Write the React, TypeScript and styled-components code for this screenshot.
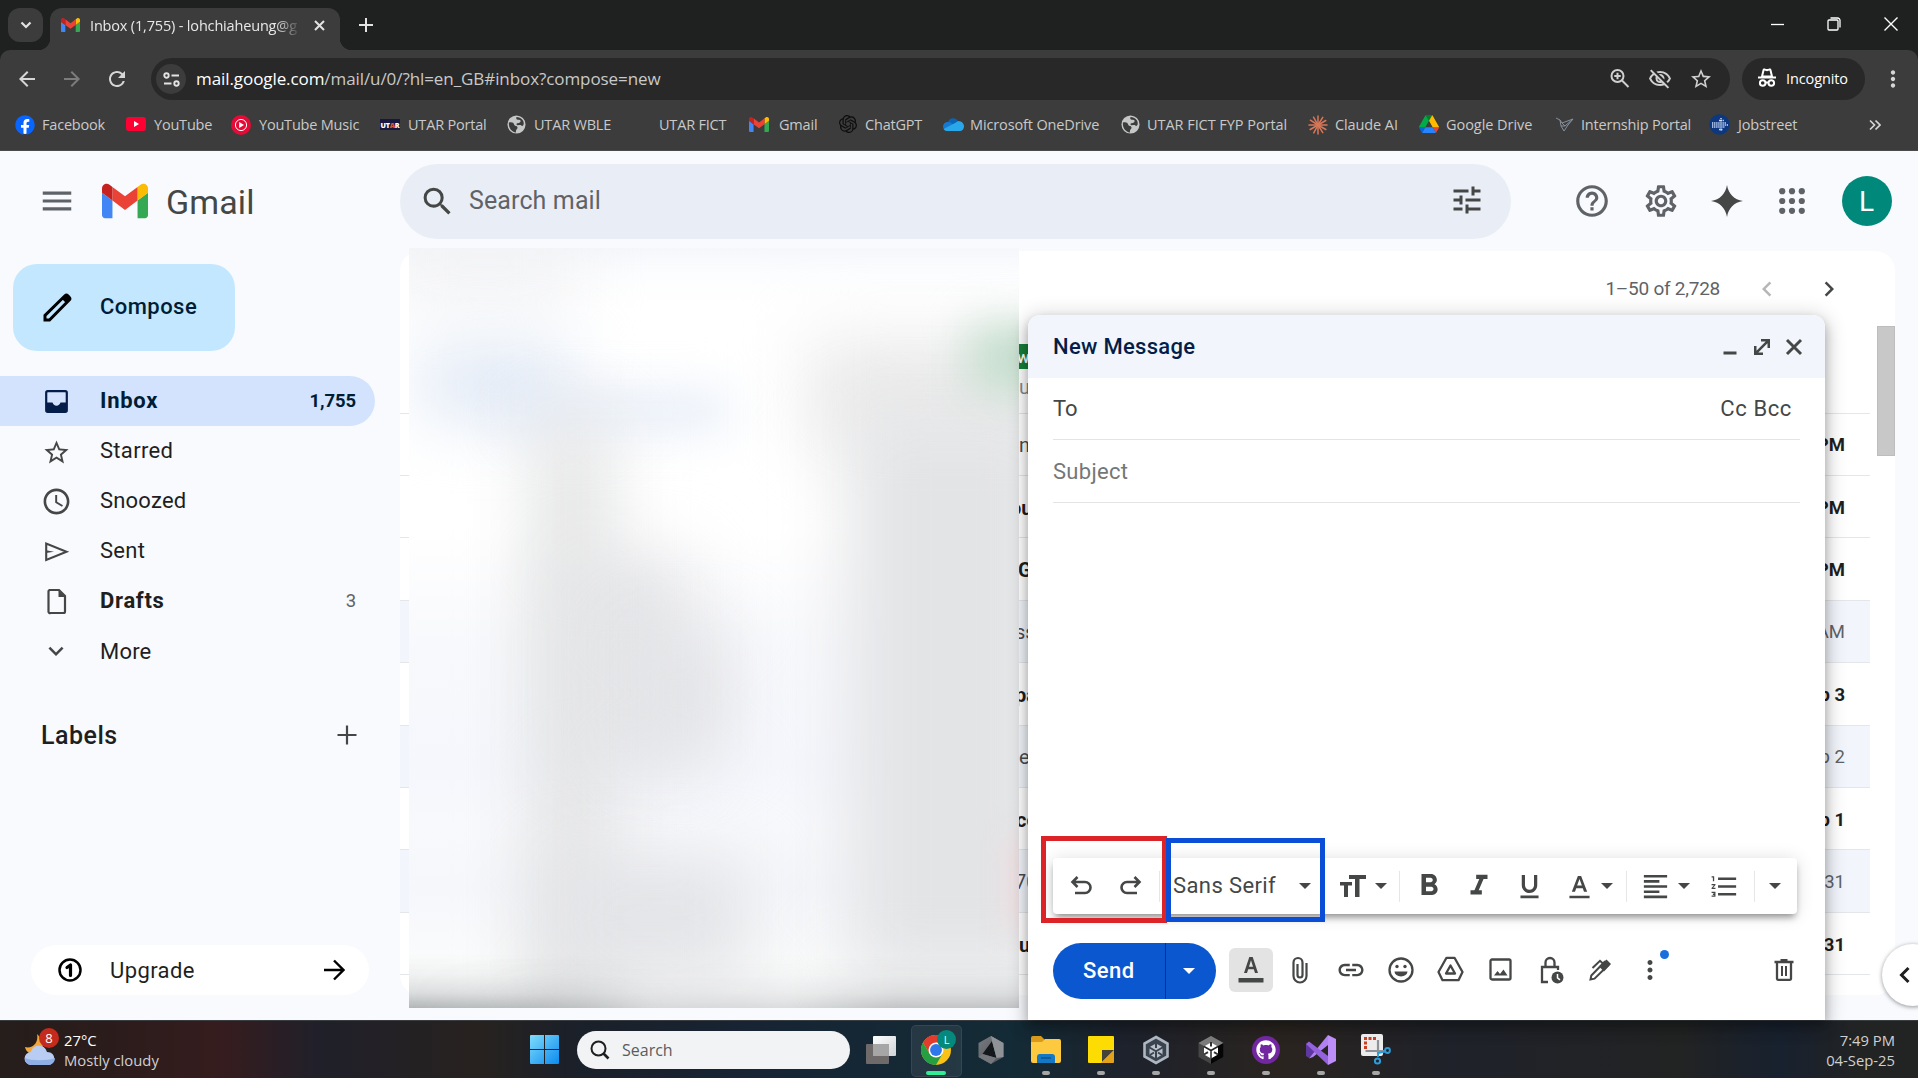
import React from "react";
import styled, { createGlobalStyle, css } from "styled-components";
import {
  MdAccessTime, MdArrowBack, MdArrowForward, MdChevronLeft, MdChevronRight,
  MdExpandMore, MdFormatAlignLeft, MdFormatBold, MdFormatItalic, MdFormatListNumbered,
  MdFormatUnderlined, MdHelpOutline, MdLink, MdMenu, MdMoreVert, MdOutlineSettings,
  MdOutlineVisibilityOff, MdRefresh, MdSearch, MdStarOutline, MdTune,
} from "react-icons/md";
import { FaFacebook, FaGithub, FaUnity } from "react-icons/fa";
import { SiOpenai } from "react-icons/si";

const GlobalStyle = createGlobalStyle`
  * { box-sizing: border-box; }
  body { margin: 0; background: #f8fafd; overflow: hidden; }
`;

const ui = `"Open Sans", "Noto Sans", sans-serif`;
const product = `Roboto, "Liberation Sans", sans-serif`;

const Screen = styled.div`
  position: relative;
  width: 1918px;
  height: 1078px;
  overflow: hidden;
  display: flex;
  flex-direction: column;
  font-family: ${product};
  svg { display: block; flex: none; }
`;

/* One icon cell: a fixed square with a gap before it */
const Cell = styled.span<{ $s: number; $ml?: number; $c?: string; $dy?: number }>`
  flex: none;
  display: flex;
  align-items: center;
  justify-content: center;
  width: ${(p) => p.$s}px;
  height: ${(p) => p.$s}px;
  margin-left: ${(p) => p.$ml ?? 0}px;
  margin-top: ${(p) => p.$dy ?? 0}px;
  color: ${(p) => p.$c ?? "#444746"};
  svg { width: 100%; height: 100%; }
`;

const Text = styled.span<{ $size: number; $ls?: number; $c?: string; $weight?: number; $ml?: number; $dy?: number }>`
  flex: none;
  white-space: pre;
  line-height: 1.2;
  font-size: ${(p) => p.$size}px;
  letter-spacing: ${(p) => p.$ls ?? 0}px;
  font-weight: ${(p) => p.$weight ?? 400};
  color: ${(p) => p.$c ?? "#1f1f1f"};
  margin-left: ${(p) => p.$ml ?? 0}px;
  margin-top: ${(p) => p.$dy ?? 0}px;
`;

/* ---------- Browser frame ---------- */
const TabStrip = styled.div`
  flex: none;
  height: 50px;
  background: #1f2120;
  display: flex;
  align-items: center;
  padding-left: 8px;
  font-family: ${ui};
`;
const TabSearch = styled.div`
  width: 35px;
  height: 34px;
  border-radius: 12px;
  background: #3c3c3c;
  display: flex;
  align-items: center;
  justify-content: center;
  color: #e3e3e3;
`;
const Tab = styled.div`
  position: relative;
  width: 290px;
  height: 42px;
  margin: 8px 0 0 7px;
  border-radius: 12px 12px 0 0;
  background: #3c3c3c;
  display: flex;
  align-items: center;
  padding: 0 0 8px 11px;
  &::before, &::after {
    content: "";
    position: absolute;
    bottom: 0;
    width: 12px;
    height: 12px;
  }
  &::before { left: -12px; background: radial-gradient(circle at 0 0, transparent 12px, #3c3c3c 12.5px); }
  &::after { right: -12px; background: radial-gradient(circle at 100% 0, transparent 12px, #3c3c3c 12.5px); }
`;
const TabTitle = styled.div`
  width: 211px;
  margin: 1px 0 0 10px;
  overflow: hidden;
  white-space: nowrap;
  font-size: 14.5px;
  letter-spacing: -0.17px;
  line-height: 20px;
  color: #e8e8e8;
  mask-image: linear-gradient(90deg, #000 88%, transparent 100%);
`;
const WindowButtons = styled.div`
  margin-left: auto;
  display: flex;
  align-items: center;
  padding: 0 20px 2px 0;
  gap: 43px;
`;
const ToolbarBack = styled.div`
  flex: none;
  background: #1f2120;
`;
const Toolbar = styled.div`
  height: 57px;
  padding-top: 1px;
  background: #3c3c3c;
  border-radius: 10px 10px 0 0;
  display: flex;
  align-items: center;
  font-family: ${ui};
`;
const Address = styled.div`
  width: 1579px;
  height: 42px;
  border-radius: 21px;
  background: #282828;
  margin-left: 22px;
  display: flex;
  align-items: center;
  padding-left: 5px;
`;
const SiteInfo = styled.div`
  width: 30px;
  height: 30px;
  border-radius: 50%;
  background: #3c3c3c;
  display: flex;
  align-items: center;
  justify-content: center;
`;
const AddressIcons = styled.div`
  margin-left: auto;
  display: flex;
  gap: 17px;
  padding-right: 17px;
`;
const Incognito = styled.div`
  width: 123px;
  height: 42px;
  margin-left: 12px;
  border-radius: 21px;
  background: #282828;
  display: flex;
  align-items: center;
  padding-left: 15px;
`;
const Bookmarks = styled.div`
  flex: none;
  height: 44px;
  background: #3c3c3c;
  border-bottom: 1px solid #4a4a4a;
  display: flex;
  align-items: center;
  padding: 0 0 8px 15px;
  font-family: ${ui};
`;
const Bookmark = styled.div<{ $w: number }>`
  flex: none;
  width: ${(p) => p.$w}px;
  display: flex;
  align-items: center;
`;

/* ---------- Gmail ---------- */
const Mail = styled.div`
  position: relative;
  flex: none;
  height: 869px;
  background: #f8fafd;
  display: flex;
  flex-direction: column;
`;
const Header = styled.header`
  flex: none;
  height: 100px;
  display: flex;
  align-items: center;
`;
const Brand = styled.div`
  width: 400px;
  display: flex;
  align-items: center;
`;
const SearchBox = styled.div`
  width: 1111px;
  height: 75px;
  border-radius: 38px;
  background: #e9eef6;
  display: flex;
  align-items: center;
`;
const Avatar = styled.div`
  width: 50px;
  height: 50px;
  margin-left: 37px;
  border-radius: 50%;
  background: #00897b;
  color: #fff;
  font-size: 28px;
  display: flex;
  align-items: center;
  justify-content: center;
  padding-right: 1px;
`;
const Body = styled.div`
  flex: 1;
  display: flex;
  min-height: 0;
`;
const Sidebar = styled.nav`
  width: 400px;
  flex: none;
  display: flex;
  flex-direction: column;
`;
const ComposeButton = styled.div`
  width: 222px;
  height: 87px;
  margin: 13px 0 25px 13px;
  border-radius: 24px;
  background: #c2e7ff;
  display: flex;
  align-items: center;
  padding-left: 27px;
`;
const Folder = styled.div<{ $active?: boolean }>`
  width: 375px;
  height: 50px;
  display: flex;
  align-items: center;
  padding: 0 19px 0 41px;
  border-radius: 0 25px 25px 0;
  ${(p) => p.$active && css`background: #d3e3fd;`}
`;
const Count = styled.span<{ $bold?: boolean }>`
  margin-left: auto;
  font-size: 18.5px;
  line-height: 1.2;
  letter-spacing: -0.1px;
  font-weight: ${(p) => (p.$bold ? 700 : 400)};
  color: ${(p) => (p.$bold ? "#001d35" : "#5f6368")};
`;
const LabelsHead = styled.div`
  display: flex;
  align-items: center;
  justify-content: space-between;
  height: 40px;
  margin-top: 39px;
  padding: 0 39px 0 41px;
`;
const Upgrade = styled.div`
  width: 338px;
  height: 50px;
  margin: auto 0 25px 31px;
  border-radius: 25px;
  background: #fff;
  display: flex;
  align-items: center;
  padding: 0 23px 0 26px;
`;
const ListPanel = styled.main`
  position: relative;
  width: 1495px;
  height: 744px;
  border-radius: 20px;
  background: #fff;
`;
const Pager = styled.div`
  height: 75px;
  display: flex;
  align-items: center;
  justify-content: flex-end;
  padding-right: 51px;
`;
const Rows = styled.div`
  width: 1470px;
`;
const Row = styled.div<{ $h?: number; $read?: boolean }>`
  height: ${(p) => p.$h ?? 62.43}px;
  border-bottom: 1px solid #e4e7ea;
  background: ${(p) => (p.$read ? "#f2f6fc" : "#fff")};
  display: flex;
  align-items: center;
  justify-content: space-between;
  padding: 2px 25px 0 619px;
`;
const Snippet = styled.span<{ $bold?: boolean; $shift?: number; $c?: string }>`
  width: 10px;
  overflow: hidden;
  white-space: nowrap;
  text-indent: ${(p) => p.$shift ?? 0}px;
  font-size: 20px;
  line-height: 26px;
  font-weight: ${(p) => (p.$bold ? 700 : 400)};
  color: ${(p) => p.$c ?? (p.$bold ? "#1f1f1f" : "#4a4d51")};
`;
const Stamp = styled.span<{ $bold?: boolean }>`
  font-size: 18.5px;
  font-weight: ${(p) => (p.$bold ? 700 : 400)};
  color: ${(p) => (p.$bold ? "#1f1f1f" : "#5f6368")};
`;
const AdSnippet = styled.div`
  width: 10px;
  overflow: hidden;
  display: flex;
  flex-direction: column;
  gap: 5px;
  padding-top: 3px;
`;
const AdChip = styled.span`
  height: 25px;
  background: #188038;
  color: #fff;
  font-size: 17px;
  font-weight: 500;
  line-height: 26px;
  text-indent: -2px;
`;
const ScrollThumb = styled.div`
  position: absolute;
  right: 0;
  top: 75px;
  width: 18px;
  height: 130px;
  background: #c8c8c8;
  border: 1px solid #bdbdbd;
`;
const Censor = styled.div`
  position: absolute;
  left: 9px;
  top: -3px;
  width: 610px;
  height: 760px;
  overflow: hidden;
  background: linear-gradient(180deg, #f5f7fb 0, #fcfdfe 26px, #ffffff 60px, #ffffff 280px, #f8f9fc 400px, #f5f7fc 520px, #f8f9fc 580px, #f5f7fb 640px, #fafbfb 710px);
`;
const Blob = styled.div<{ $x: number; $y: number; $w: number; $h: number; $c: string; $b?: number }>`
  position: absolute;
  left: ${(p) => p.$x}px;
  top: ${(p) => p.$y}px;
  width: ${(p) => p.$w}px;
  height: ${(p) => p.$h}px;
  background: ${(p) => p.$c};
  filter: blur(${(p) => p.$b ?? 34}px);
`;
const CensorFoot = styled.div`
  position: absolute;
  inset: auto 0 0 0;
  height: 54px;
  background: linear-gradient(180deg, rgba(150, 155, 158, 0), rgba(150, 155, 158, 0.1) 40%, rgba(145, 149, 152, 0.3) 72%, rgba(130, 134, 137, 0.6));
  mask-image: linear-gradient(90deg, #000, rgba(0, 0, 0, 0.8) 22%, rgba(0, 0, 0, 0.42) 40%, rgba(0, 0, 0, 0.42) 62%, rgba(0, 0, 0, 0.75) 80%);
`;
const SideToggle = styled.div`
  position: absolute;
  left: 1882px;
  top: 793px;
  width: 62px;
  height: 62px;
  border-radius: 50%;
  background: #fff;
  box-shadow: 0 1px 4px rgba(60, 64, 67, 0.55);
  display: flex;
  align-items: center;
  padding-left: 8px;
`;

/* ---------- Compose window ---------- */
const Compose = styled.section`
  position: absolute;
  left: 1028px;
  top: 164px;
  width: 797px;
  height: 705px;
  border-radius: 12px 12px 0 0;
  background: #fff;
  box-shadow: 0 8px 14px 1px rgba(0, 0, 0, 0.16), 0 3px 20px 4px rgba(0, 0, 0, 0.14), 0 4px 8px rgba(0, 0, 0, 0.12);
  display: flex;
  flex-direction: column;
`;
const ComposeHead = styled.div`
  flex: none;
  height: 63px;
  border-radius: 12px 12px 0 0;
  background: #f2f6fc;
  display: flex;
  align-items: center;
  padding: 0 22px 0 25px;
`;
const HeadButtons = styled.div`
  margin-left: auto;
  display: flex;
  align-items: center;
`;
const Field = styled.div<{ $h: number }>`
  flex: none;
  height: ${(p) => p.$h}px;
  margin: 0 25px;
  border-bottom: 1px solid #e4e4e4;
  display: flex;
  align-items: center;
  justify-content: space-between;
  padding: 2px 8px 0 0;
`;
const FormatBar = styled.div`
  flex: none;
  width: 744px;
  height: 56px;
  margin: auto 0 29px 25px;
  border-radius: 4px;
  background: #fff;
  box-shadow: 0 5px 7px -2px rgba(0, 0, 0, 0.4), 0 1px 18px rgba(0, 0, 0, 0.13);
  display: flex;
  align-items: center;
`;
const Divider = styled.span<{ $ml: number }>`
  width: 1px;
  height: 31px;
  margin-left: ${(p) => p.$ml}px;
  background: #e6e6e6;
`;
const Caret = styled.span<{ $ml: number; $c?: string }>`
  flex: none;
  margin-left: ${(p) => p.$ml}px;
  border: 6.5px solid transparent;
  border-top-color: ${(p) => p.$c ?? "#444746"};
  border-bottom-width: 0;
`;
const Actions = styled.div`
  flex: none;
  height: 56px;
  margin: 0 0 21px 25px;
  display: flex;
  align-items: center;
`;
const SendButton = styled.div`
  width: 163px;
  height: 56px;
  border-radius: 28px;
  background: #0b57d0;
  display: flex;
  align-items: center;
`;
const SendText = styled.span`
  width: 113px;
  height: 56px;
  border-right: 1px solid #06357f;
  color: #fff;
  font-size: 22px;
  font-weight: 500;
  letter-spacing: 0.5px;
  line-height: 55px;
  padding-left: 30px;
`;
const ToggleTile = styled.div`
  width: 44px;
  height: 44px;
  margin: 0 0 3px 13px;
  border-radius: 6px;
  background: #e3e3e3;
  display: flex;
  align-items: center;
  justify-content: center;
`;
const Kebab = styled.div`
  position: relative;
  width: 24px;
  height: 24px;
  margin: -2px 0 0 27px;
  &::after {
    content: "";
    position: absolute;
    left: 21px;
    top: -8px;
    width: 9px;
    height: 9px;
    border-radius: 50%;
    background: #1a6fdc;
  }
  svg { width: 30px; height: 30px; margin: -3px 0 0 -4px; }
`;
const Marker = styled.div<{ $x: number; $y: number; $w: number; $h: number; $c: string }>`
  position: absolute;
  left: ${(p) => p.$x}px;
  top: ${(p) => p.$y}px;
  width: ${(p) => p.$w}px;
  height: ${(p) => p.$h}px;
  border: 5px solid ${(p) => p.$c};
`;

/* ---------- Taskbar ---------- */
const Taskbar = styled.footer`
  flex: none;
  height: 58px;
  border-top: 1px solid #3a3d40;
  background: linear-gradient(90deg, #251e1b 0, #2b1c1b 110px, #361c1e 220px, #20202a 320px, #27221f 480px, #1b2029 570px,
    #172433 750px, #132b36 1010px, #1e222c 1130px, #2a241f 1280px, #1f222a 1450px, #222323 1680px, #18212f 1780px, #222323 1860px);
  display: flex;
  align-items: center;
  font-family: ${ui};
`;
const Weather = styled.div`
  width: 530px;
  display: flex;
  align-items: center;
  gap: 7px;
  padding-left: 23px;
`;
const WeatherIcon = styled.div`
  position: relative;
  width: 34px;
  height: 40px;
`;
const WeatherBadge = styled.span`
  position: absolute;
  left: 16px;
  top: -2px;
  width: 20px;
  height: 20px;
  border-radius: 50%;
  background: #c42b1c;
  color: #fff;
  font-size: 13px;
  line-height: 20px;
  text-align: center;
`;
const Lines = styled.div<{ $right?: boolean }>`
  display: flex;
  flex-direction: column;
  align-items: ${(p) => (p.$right ? "flex-end" : "flex-start")};
  font-size: 14.8px;
  line-height: 20px;
  color: #d0d0d0;
  white-space: nowrap;
`;
const Bright = styled.span`
  color: #fff;
`;
const TaskSearch = styled.div`
  width: 273px;
  height: 38px;
  margin-left: 18px;
  border-radius: 19px;
  background: #f2f3f4;
  display: flex;
  align-items: center;
  padding-left: 13px;
`;
const Apps = styled.div`
  display: flex;
  margin-left: 3px;
`;
const TaskApp = styled.div<{ $active?: boolean }>`
  position: relative;
  width: 55px;
  height: 58px;
  display: flex;
  align-items: center;
  justify-content: center;
  ${(p) => p.$active && css`
    &::before {
      content: "";
      position: absolute;
      left: 3px;
      top: 4px;
      width: 49px;
      height: 50px;
      border-radius: 5px;
      background: rgba(255, 255, 255, 0.07);
      border: 1px solid rgba(255, 255, 255, 0.08);
    }
  `}
  svg { position: relative; }
`;
const Running = styled.span<{ $active?: boolean }>`
  position: absolute;
  bottom: 4px;
  left: ${(p) => (p.$active ? 17.5 : 23.5)}px;
  width: ${(p) => (p.$active ? 20 : 8)}px;
  height: 4px;
  border-radius: 2px;
  background: ${(p) => (p.$active ? "#35ec96" : "#a6a6a6")};
`;
const AppBadge = styled.span`
  position: absolute;
  left: 29px;
  top: 9px;
  width: 19px;
  height: 19px;
  border-radius: 50%;
  background: #04897c;
  color: #e8f5f3;
  font-size: 11px;
  line-height: 19px;
  text-align: center;
`;
const Clock = styled.div`
  margin-left: auto;
  padding-right: 23px;
`;

/* ---------- Drawings ---------- */
const GmailLogo = ({ w }: { w: number }) => (
  <svg width={w} height={w * 0.75} viewBox="52 42 88 66">
    <path fill="#4285f4" d="M58 108h14V74L52 59v43c0 3.32 2.69 6 6 6" />
    <path fill="#34a853" d="M120 108h14c3.32 0 6-2.69 6-6V59l-20 15" />
    <path fill="#fbbc04" d="M120 48v26l20-15v-8c0-7.42-8.47-11.65-14.4-7.2" />
    <path fill="#ea4335" d="M72 74V48l24 18 24-18v26L96 92" />
    <path fill="#c5221f" d="M52 51v8l20 15V48l-5.6-4.2c-5.94-4.45-14.4-.22-14.4 7.2" />
  </svg>
);
const stroke = (w: number) => ({ fill: "none", stroke: "currentColor", strokeWidth: w });

const Globe = () => (
  <svg width="19" height="19" viewBox="0 0 20 20">
    <circle cx="10" cy="10" r="9.5" fill="#c4c7c5" />
    <path d="M2 8c3-1 5 0 5.500 2s3 1 3.500 3-2 2-1.500 5.500C5 18 1.500 14 2 8zM10 2c-1 2 .5 3 2.500 3s2.500 2 1 3-4 .5-3.500 2 4 0 5 1 2 .5 2.500-1C18.500 6 15 2 10 2z" fill="#3c3c3c" />
  </svg>
);
const icons: Record<string, React.ReactNode> = {
  facebook: <svg width="20" height="20" viewBox="0 0 20 20"><circle cx="10" cy="10" r="9" fill="#fff" /><FaFacebook size={20} color="#0866ff" /></svg>,
  youtube: <svg width="20" height="14" viewBox="0 0 20 14"><rect width="20" height="14" rx="3" fill="#f03" /><path d="M8 4v6l5-3z" fill="#fff" /></svg>,
  music: <svg width="20" height="20" viewBox="0 0 20 20"><circle cx="10" cy="10" r="10" fill="#e60a36" /><circle cx="10" cy="10" r="5.600" fill="none" stroke="#fff" /><path d="M8.200 7v6l4.800-3z" fill="#fff" /></svg>,
  utar: <svg width="20" height="11" viewBox="0 0 20 11"><rect width="20" height="11" fill="#17173f" /><text x="0.500" y="8.500" fontFamily="Open Sans" fontWeight="800" fontSize="7.200" textLength="19" fill="#fff">UT<tspan fill="#e2562f">A</tspan>R</text></svg>,
  globe: <Globe />,
  gmail: <GmailLogo w={20} />,
  gpt: <SiOpenai size={18} color="#0c0c0c" />,
  onedrive: <svg width="21" height="14" viewBox="0 0 21 14"><path d="M5 5a5.500 5.500 0 0 1 10-1l-8 6z" fill="#0a64b8" /><path d="M0 9.500C0 7 2 5 5 5c4 0 5 3 8 4l-8 5C2 14 0 12 0 9.500z" fill="#1679d0" /><path d="M15 4c4 0 6 3 6 5.500S19 14 17 14H4c-1.500 0-2.800-.8-3.400-2L12 6z" fill="#28a8ea" /></svg>,
  claude: (
    <svg width="20" height="20" viewBox="-10 -10 20 20" stroke="#d97757" strokeWidth="1.500" strokeLinecap="round">
      {[0, 30, 58, 90, 118, 150, 180, 212, 240, 270, 302, 330].map((a) => <line key={a} x1="0" y1="0" x2="9" y2="0" transform={`rotate(${a})`} />)}
    </svg>
  ),
  drive: <svg width="20" height="18" viewBox="0 0 87.3 78"><path d="m6.600 66.850 3.850 6.650c.8 1.400 1.950 2.500 3.300 3.300l13.750-23.800h-27.500c0 1.550.4 3.100 1.200 4.500z" fill="#0066da" /><path d="m43.650 25-13.750-23.800c-1.350.8-2.500 1.900-3.300 3.300l-25.400 44a9.060 9.060 0 0 0 -1.200 4.500h27.500z" fill="#00ac47" /><path d="m73.550 76.800c1.350-.8 2.500-1.900 3.300-3.300l1.600-2.750 7.650-13.250c.8-1.400 1.200-2.950 1.200-4.500h-27.500l5.850 11.500z" fill="#ea4335" /><path d="m43.650 25 13.750-23.800c-1.350-.8-2.900-1.200-4.500-1.200h-18.500c-1.600 0-3.150.45-4.500 1.200z" fill="#00832d" /><path d="m59.800 53h-32.300l-13.750 23.800c1.350.8 2.900 1.200 4.500 1.200h50.800c1.600 0 3.150-.45 4.500-1.200z" fill="#2684fc" /><path d="m73.400 26.500-12.700-22c-.8-1.400-1.950-2.500-3.300-3.300l-13.750 23.800 16.150 28h27.450c0-1.550-.4-3.100-1.200-4.500z" fill="#ffba00" /></svg>,
  bird: <svg width="18" height="15" viewBox="0 0 18 15" fill="none" stroke="#86909c" strokeWidth="1"><path d="M0 1l4 2 2 3 11-4-5 6-4 6-3-5-1-6M6 6l3 3 8-7M5 9l4 0" /></svg>,
  job: (
    <svg width="21" height="21" viewBox="0 0 21 21"><circle cx="10.500" cy="10.500" r="10.200" fill="#0d3880" />
      <g stroke="#cfe0ff" strokeWidth="1.500" strokeDasharray="1.300 .8"><path d="M3 9h14M3 11h16M3 13h13M10 6.500h5M10 15.500h4M12 4v13" /></g></svg>
  ),
};
const bookmarks: { icon?: string; iw: number; text: string; w: number; tx: number; ls?: number }[] = [
  { icon: "facebook", iw: 20, text: "Facebook", w: 111, tx: 7 },
  { icon: "youtube", iw: 20, text: "YouTube", w: 105, tx: 8 },
  { icon: "music", iw: 20, text: "YouTube Music", w: 149, tx: 8 },
  { icon: "utar", iw: 20, text: "UTAR Portal", w: 127, tx: 8 },
  { icon: "globe", iw: 19, text: "UTAR WBLE", w: 124, tx: 8 },
  { iw: 20, text: "UTAR FICT", w: 118, tx: 8 },
  { icon: "gmail", iw: 20, text: "Gmail", w: 90, tx: 10 },
  { icon: "gpt", iw: 18, text: "ChatGPT", w: 104, tx: 8, ls: -0.2 },
  { icon: "onedrive", iw: 20, text: "Microsoft OneDrive", w: 178, tx: 7, ls: -0.13 },
  { icon: "globe", iw: 19, text: "UTAR FICT FYP Portal", w: 187, tx: 7, ls: -0.05 },
  { icon: "claude", iw: 20, text: "Claude AI", w: 111, tx: 7, ls: -0.1 },
  { icon: "drive", iw: 20, text: "Google Drive", w: 137, tx: 7, ls: -0.05 },
  { icon: "bird", iw: 18, text: "Internship Portal", w: 153, tx: 7 },
  { icon: "job", iw: 21, text: "Jobstreet", w: 160, tx: 8 },
];
const IconBox = styled.span<{ $w: number }>`
  width: ${(p) => p.$w}px;
  display: flex;
  justify-content: center;
`;

const rows: { s: string; sb?: boolean; shift?: number; t: string; read?: boolean; tb?: boolean }[] = [
  { s: "n", t: "7:12 PM", tb: true },
  { s: "ou", sb: true, shift: -9, t: "6:40 PM", tb: true },
  { s: "G", sb: true, shift: -1, t: "1:05 PM", tb: true },
  { s: "ss", shift: -4, t: "9:30 AM", read: true },
  { s: "pa", sb: true, shift: -4, t: "Sep 3", tb: true },
  { s: "e", t: "Sep 2", read: true },
  { s: "co", sb: true, shift: -3, t: "Sep 1", tb: true },
  { s: "70", shift: -4, t: "Aug 31", read: true },
  { s: "u", sb: true, t: "Aug 31", tb: true },
];

const Hexagon = ({ light }: { light?: boolean }) => (
  <svg width="28" height="30" viewBox="0 0 28 30">
    {light ? (
      <>
        <path d="M14 2l11.500 6.500v13L14 28 2.500 21.500v-13z" fill="#3a4350" stroke="#aeb6c0" strokeWidth="2.600" />
        <path d="M14 8.500l6 3.300-6 3.400-6-3.400zM7.500 13.500l5.500 3.200v6l-5.500-3.200zM20.500 13.500L15 16.700v6l5.500-3.200z" fill="#b9c0c9" />
        <path d="M14 8v5M8 20l4-2.500M20 20l-4-2.500" stroke="#3a4350" strokeWidth="2" />
      </>
    ) : (
      <>
        <path d="M14 1l12.500 7v14L14 29 1.500 22V8z" fill="#454545" />
        <path d="M14 1l12.500 7L14 15 1.500 8z" fill="#7b7b7b" />
        <path d="M26.500 8v14L14 29V15z" fill="#050505" />
        <path d="M14 7.500l7 4v8l-7 4-7-4v-8z" fill="#fff" />
        <path d="M14 15.500v8M14 15.500l-7-4M14 15.500l7-4" stroke="#222" strokeWidth="1.500" />
        <path d="M14 7v4.500M7 19.500l4-2.300M21 19.500l-4-2.300" stroke="#333" strokeWidth="2" />
      </>
    )}
  </svg>
);

const taskApps: { icon: React.ReactNode; state?: "active" | "running" }[] = [
  { icon: <svg width="30" height="28" viewBox="0 0 30 28"><defs><linearGradient id="tv" x2="1" y2="1"><stop stopColor="#fff" /><stop offset="1" stopColor="#cfd3d6" /></linearGradient></defs><rect y="8" width="23" height="20" rx="1" fill="#6e6a69" /><rect x="7" y="0" width="23" height="20" rx="1" fill="url(#tv)" /><path d="M7 8h16v12H7z" fill="#a6a6a6" /></svg> },
  { state: "active", icon: (
    <svg width="30" height="30" viewBox="0 0 48 48"><circle cx="24" cy="24" r="24" fill="#fbc116" /><path d="M24 12h20.800A24 24 0 0 0 3.200 12L13.600 30z" fill="#e33b2e" /><path d="M3.200 12L13.600 30 24 36v12A24 24 0 0 1 3.200 12" fill="#269f43" /><path d="M13.600 30L24 48l10.400-18z" fill="#269f43" /><circle cx="24" cy="24" r="12" fill="#fff" /><circle cx="24" cy="24" r="9.500" fill="#2f77ea" /></svg>
  ) },
  { icon: <svg width="26" height="28" viewBox="0 0 26 28"><defs><linearGradient id="hx" x2="1" y2="1"><stop stopColor="#777b80" /><stop offset="1" stopColor="#50545a" /></linearGradient></defs><path d="M13 0l12.500 7v14L13 28 .5 21V7z" fill="url(#hx)" /><path d="M14 5L4.500 18l14 4z" fill="#14171b" /><path d="M14 5l4.500 17 7-1V7L13 0z" fill="#8f9398" /><path d="M4.500 18l14 4-5.500 6L.5 21z" fill="#74787d" /></svg> },
  { state: "running", icon: <svg width="30" height="27" viewBox="0 0 30 27"><path d="M0 2a2 2 0 0 1 2-2h8l4 4-3 4H0z" fill="#d99a1c" /><path d="M0 6h11l3-3h14a2 2 0 0 1 2 2v20a2 2 0 0 1-2 2H2a2 2 0 0 1-2-2z" fill="#fdc93f" /><path d="M6 27v-6a3 3 0 0 1 3-3h12a3 3 0 0 1 3 3v6z" fill="#1478c4" /><path d="M10 22h10" stroke="#0c5492" strokeWidth="1.500" /></svg> },
  { state: "running", icon: <svg width="26" height="27" viewBox="0 0 26 27"><path d="M1 0h24a1 1 0 0 1 1 1v13L14 27H1a1 1 0 0 1-1-1V1a1 1 0 0 1 1-1z" fill="#fddc04" /><path d="M14 14h12L14 26z" fill="#474238" /><path d="M26 14v12a1 1 0 0 1-1 1H13z" fill="#e2a31a" /></svg> },
  { state: "running", icon: <Hexagon light /> },
  { state: "running", icon: <Hexagon /> },
  { state: "running", icon: <svg width="28" height="28" viewBox="0 0 28 28"><circle cx="14" cy="14" r="14" fill="#7226a0" /><FaGithub x={4} y={4} size={20} color="#fff" /></svg> },
  { state: "running", icon: <svg width="30" height="30" viewBox="0 0 30 30"><path d="M0 9v12l3 2 5-4V11L3 7z" fill="#5f37a0" /><path d="M3 23.500L22 0v10L7 22z" fill="#b183f0" /><path d="M0 9l3-2.500L22 21v9z" fill="#9362dc" /><path d="M22 0l8 4v22l-8 4z" fill="#bd8df8" /></svg> },
  { state: "running", icon: <svg width="31" height="31" viewBox="-1 0 31 31"><rect width="22" height="22" rx="2" fill="#ececec" /><path d="M15 4.500H4.500V15" fill="none" stroke="#c8401f" strokeWidth="3" strokeDasharray="3 1.500" /><path d="M17 6v14M4.500 17H24" stroke="#8d9296" strokeWidth="2.200" /><circle cx="26.500" cy="16.500" r="2.400" fill="none" stroke="#2c9ddb" strokeWidth="2" /><circle cx="16.500" cy="27" r="2.600" fill="none" stroke="#2c9ddb" strokeWidth="2" /><path d="M17 23v-4l7-1.500" stroke="#2c9ddb" strokeWidth="1.800" fill="none" /></svg> },
];

const g = "#444746";

export default function App() {
  return (
    <Screen>
      <GlobalStyle />
      <TabStrip>
        <TabSearch><svg width="12" height="8" viewBox="0 0 12 8" {...stroke(2.2)}><path d="M1.500 1.500L6 6l4.500-4.500" /></svg></TabSearch>
        <Tab>
          <GmailLogo w={19} />
          <TabTitle>Inbox (1,755) - lohchiaheung@g</TabTitle>
          <Cell $s={11} $ml={13} $c="#e3e3e3"><svg viewBox="0 0 11 11" {...stroke(2)}><path d="M1 1l9 9M10 1l-9 9" /></svg></Cell>
        </Tab>
        <Cell $s={14} $ml={19} $c="#e3e3e3"><svg viewBox="0 0 14 14" {...stroke(2)}><path d="M7 0v14M0 7h14" /></svg></Cell>
        <WindowButtons>
          <Cell $s={13} $c="#fff"><svg viewBox="0 0 13 13" {...stroke(1.3)}><path d="M0 6.500h13" /></svg></Cell>
          <Cell $s={14} $c="#fff"><svg viewBox="0 0 14 14" {...stroke(1.3)}><rect x="1" y="3" width="10" height="10" rx="1" /><path d="M3.500 1h7a2.500 2.500 0 0 1 2.500 2.500v7" /></svg></Cell>
          <Cell $s={14} $c="#fff"><svg viewBox="0 0 14 14" {...stroke(1.4)}><path d="M.5.5l13 13M13.500.5l-13 13" /></svg></Cell>
        </WindowButtons>
      </TabStrip>
      <ToolbarBack>
        <Toolbar>
          <Cell $s={24} $ml={15} $c="#d6d6d6"><MdArrowBack /></Cell>
          <Cell $s={24} $ml={21} $c="#7c7c7c"><MdArrowForward /></Cell>
          <Cell $s={24} $ml={21} $c="#d6d6d6"><MdRefresh /></Cell>
          <Address>
            <SiteInfo>
              <Cell $s={17} $c="#e3e3e3"><svg viewBox="0 0 17 17" {...stroke(1.9)}><circle cx="3.500" cy="4.500" r="2.200" /><path d="M8.500 4.500H16M1 12.500h7.500" /><circle cx="13.500" cy="12.500" r="2.200" /></svg></Cell>
            </SiteInfo>
            <Text $size={17} $ls={-0.08} $c="#fff" $ml={10} $dy={1}>mail.google.com</Text>
            <Text $size={17} $ls={-0.08} $c="#c9c9c9" $dy={1}>/mail/u/0/?hl=en_GB#inbox?compose=new</Text>
            <AddressIcons>
              <Cell $s={23} $c="#d0d0d0"><svg viewBox="0 0 23 23" {...stroke(2)}><circle cx="9.500" cy="9" r="6" /><path d="M14 13.500l6.500 6.500M9.500 5.800v6.400M6.300 9h6.400" /></svg></Cell>
              <Cell $s={24} $c="#d0d0d0"><MdOutlineVisibilityOff /></Cell>
              <Cell $s={24} $c="#d0d0d0"><MdStarOutline /></Cell>
            </AddressIcons>
          </Address>
          <Incognito>
            <Cell $s={20} $c="#fff" $dy={-2}>
              <svg viewBox="0 0 20 20"><path d="M5 8.500L6.500 2.200C6.700 1.500 7.300 1.200 8 1.500l2 .7 2-.7c.7-.3 1.300 0 1.500.7L15 8.500z" fill="none" stroke="currentColor" strokeWidth="2" /><path d="M1 8.500h18v2H1z" fill="currentColor" /><g {...stroke(2)}><circle cx="5.700" cy="15" r="2.800" /><circle cx="14.300" cy="15" r="2.800" /><path d="M8.500 14.500h3" /></g></svg>
            </Cell>
            <Text $size={14.5} $ls={-0.12} $c="#fff" $ml={9}>Incognito</Text>
          </Incognito>
          <Cell $s={26} $ml={15} $c="#d6d6d6"><MdMoreVert /></Cell>
        </Toolbar>
      </ToolbarBack>
      <Bookmarks>
        {bookmarks.map((b) => (
          <Bookmark key={b.text} $w={b.w}>
            <IconBox $w={b.iw}>{b.icon && icons[b.icon]}</IconBox>
            <Text $size={14.5} $ls={b.ls ?? -0.2} $c="#c9c9c9" $ml={b.tx} $dy={1}>{b.text}</Text>
          </Bookmark>
        ))}
        <Cell $s={12} $c="#d6d6d6"><svg viewBox="0 0 12 12" {...stroke(1.7)}><path d="M1 1.500L5.500 6 1 10.500M6.500 1.500L11 6l-4.500 4.500" /></svg></Cell>
      </Bookmarks>

      <Mail>
        <Header>
          <Brand>
            <Cell $s={38} $ml={38} $c="#5f6368"><MdMenu /></Cell>
            <Cell $s={46} $ml={26}><GmailLogo w={46} /></Cell>
            <Text $size={34} $c={g} $ml={18} $ls={0.1} $dy={3}>Gmail</Text>
          </Brand>
          <SearchBox>
            <Cell $s={37} $ml={19}><MdSearch /></Cell>
            <Text $size={25} $ls={0.12} $c="#5f6368" $ml={13}>Search mail</Text>
            <Cell $s={36} $ml={848} $dy={-3}><MdTune /></Cell>
          </SearchBox>
          <Cell $s={38} $ml={62} $c="#5f6368"><MdHelpOutline /></Cell>
          <Cell $s={38} $ml={31} $c="#5f6368"><MdOutlineSettings /></Cell>
          <Cell $s={32} $ml={31}><svg viewBox="0 0 32 32"><path d="M16 0c1.500 9 7 14.500 16 16-9 1.500-14.500 7-16 16C14.500 23 9 17.500 0 16 9 14.500 14.500 9 16 0z" fill={g} /></svg></Cell>
          <Cell $s={26} $ml={36} $c="#5f6368">
            <svg viewBox="0 0 26 26" fill="currentColor">{[3.2, 13, 22.8].map((x) => [3.2, 13, 22.8].map((y) => <circle key={`${x}-${y}`} cx={x} cy={y} r="3.100" />))}</svg>
          </Cell>
          <Avatar>L</Avatar>
        </Header>
        <Body>
          <Sidebar>
            <ComposeButton>
              <Cell $s={34}><svg viewBox="0 0 34 34"><path d="M5 29v-4.500L25 4.800a2 2 0 0 1 2.800 0l1.400 1.400a2 2 0 0 1 0 2.800L9.500 29z" fill="none" stroke="#000" strokeWidth="3" /><path d="M22 8l4-4.500 4.500 4.500L26 12z" fill="#000" /></svg></Cell>
              <Text $size={22} $weight={500} $ls={0.45} $c="#001d35" $ml={26}>Compose</Text>
            </ComposeButton>
            <Folder $active>
              <Cell $s={31} $c="#041e49"><svg viewBox="0 0 31 31"><rect x="5.200" y="5.200" width="20.600" height="20.600" rx="1.500" {...stroke(2.2)} /><path d="M5 16.500h6.500c.6 2 2 3.200 4 3.200s3.400-1.200 4-3.200H26V25a1 1 0 0 1-1 1H6a1 1 0 0 1-1-1z" fill="currentColor" /></svg></Cell>
              <Text $size={22} $weight={700} $ls={0.7} $c="#001d35" $ml={28}>Inbox</Text>
              <Count $bold>1,755</Count>
            </Folder>
            <Folder><Cell $s={29} $ml={1} $dy={3}><MdStarOutline /></Cell><Text $size={22} $ls={0.3} $ml={29}>Starred</Text></Folder>
            <Folder><Cell $s={31}><MdAccessTime /></Cell><Text $size={22} $ls={0.2} $ml={28}>Snoozed</Text></Folder>
            <Folder>
              <Cell $s={31}><svg viewBox="0 0 31 31"><path d="M5.200 7.500v16.500L25.500 15.700z" {...stroke(2.1)} /><path d="M5 14.300l8 1.400-8 1.400z" fill="currentColor" /></svg></Cell>
              <Text $size={22} $ls={0.3} $ml={28}>Sent</Text>
            </Folder>
            <Folder>
              <Cell $s={31}><svg viewBox="0 0 31 31"><path d="M8 4h10l6 6v15.500a1.500 1.500 0 0 1-1.500 1.500h-13A1.500 1.500 0 0 1 7.500 25.500v-20A1.500 1.500 0 0 1 9 4z" {...stroke(2.2)} /><path d="M17.500 4v7H24z" fill="currentColor" /></svg></Cell>
              <Text $size={22} $weight={700} $ls={0.7} $ml={28}>Drafts</Text>
              <Count>3</Count>
            </Folder>
            <Folder><Cell $s={30} $ml={0}><MdExpandMore /></Cell><Text $size={22} $ls={0.2} $ml={29} $dy={2}>More</Text></Folder>
            <LabelsHead>
              <Text $size={25} $weight={500} $ls={0.5} $dy={1}>Labels</Text>
              <Cell $s={28}><svg viewBox="0 0 28 28" {...stroke(2.2)}><path d="M14 4.500v19M4.500 14h19" /></svg></Cell>
            </LabelsHead>
            <Upgrade>
              <Cell $s={26}><svg viewBox="0 0 26 26"><circle cx="13" cy="13" r="10.500" fill="none" stroke="#000" strokeWidth="2.500" /><path d="M10 10.500L13.500 8v10.500" fill="none" stroke="#000" strokeWidth="3.200" strokeLinejoin="round" strokeLinecap="round" /></svg></Cell>
              <Text $size={22} $ls={0.4} $ml={27} $dy={2}>Upgrade</Text>
              <Cell $s={22} $ml={128}><svg viewBox="0 0 22 22" fill="none" stroke="#000" strokeWidth="2.400"><path d="M1 11h19M11 1.500l9.500 9.500-9.500 9.500" /></svg></Cell>
            </Upgrade>
          </Sidebar>
          <ListPanel>
            <Pager>
              <Text $size={19} $ls={-0.25} $c="#5f6368" $dy={2}>1–50 of 2,728</Text>
              <Cell $s={30} $ml={32} $c="#b4b6b8"><MdChevronLeft /></Cell>
              <Cell $s={30} $ml={32}><MdChevronRight /></Cell>
            </Pager>
            <Rows>
              <Row $h={87.5}>
                <AdSnippet>
                  <AdChip>w</AdChip>
                  <Snippet $c="#85888c">u</Snippet>
                </AdSnippet>
              </Row>
              {rows.map((r, i) => (
                <Row key={i} $read={r.read}>
                  <Snippet $bold={r.sb} $shift={r.shift}>{r.s}</Snippet>
                  <Stamp $bold={r.tb}>{r.t}</Stamp>
                </Row>
              ))}
            </Rows>
            <ScrollThumb />
            <Censor>
              <Blob $x={-20} $y={-20} $w={190} $h={70} $c="#f1f2f4" />
              <Blob $x={10} $y={100} $w={150} $h={70} $c="#dfe8f5" />
              <Blob $x={100} $y={146} $w={220} $h={34} $c="#e3ebf7" $b={24} />
              <Blob $x={125} $y={170} $w={75} $h={620} $c="#e3e4e4" />
              <Blob $x={150} $y={310} $w={130} $h={210} $c="#e4e5e7" />
              <Blob $x={220} $y={380} $w={100} $h={130} $c="#e3e4e7" />
              <Blob $x={140} $y={610} $w={200} $h={120} $c="#e3e4e7" />
              <Blob $x={400} $y={90} $w={260} $h={110} $c="#ebebeb" />
              <Blob $x={440} $y={160} $w={210} $h={570} $c="#e3e4e6" />
              <Blob $x={560} $y={78} $w={90} $h={65} $c="#c4decd" $b={22} />
              <Blob $x={600} $y={590} $w={30} $h={90} $c="#efdcde" $b={15} />
              <CensorFoot />
            </Censor>
          </ListPanel>
        </Body>
        <SideToggle><Cell $s={34}><svg viewBox="0 0 34 34" fill="none" stroke="#1f1f1f" strokeWidth="3"><path d="M18.500 10L11.500 17l7 7" /></svg></Cell></SideToggle>

        <Compose>
          <ComposeHead>
            <Text $size={22} $weight={500} $c="#041e49" $ls={0.3} $dy={2}>New Message</Text>
            <HeadButtons>
              <Cell $s={14} $dy={12}><svg viewBox="0 0 14 14"><path d="M.5 5.500h13v3H.5z" fill={g} /></svg></Cell>
              <Cell $s={18} $ml={16}><svg viewBox="0 0 18 18" fill={g}><path d="M8 1h9v9h-2.500V5.300L5.300 14.500H10V17H1V8h2.500v4.700L12.700 3.500H8z" /></svg></Cell>
              <Cell $s={18} $ml={14}><svg viewBox="0 0 18 18" {...stroke(2.9)}><path d="M2 2l14 14M16 2L2 16" /></svg></Cell>
            </HeadButtons>
          </ComposeHead>
          <Field $h={62}>
            <Text $size={22} $c={g}>To</Text>
            <Text $size={22} $c={g} $ls={0.6}>Cc Bcc</Text>
          </Field>
          <Field $h={63}><Text $size={22} $c="#747775" $ls={0.3}>Subject</Text></Field>
          <FormatBar>
            <Cell $s={24} $ml={16}><svg viewBox="0 0 24 24" {...stroke(2.6)}><path d="M8.500 3L3.500 8l5 5M4 8h12a5.500 5.500 0 0 1 0 11H6" /></svg></Cell>
            <Cell $s={24} $ml={26}><svg viewBox="0 0 24 24" {...stroke(2.6)}><path d="M15.500 3l5 5-5 5M20 8H8a5.500 5.500 0 0 0 0 11h10" /></svg></Cell>
            <Divider $ml={16} />
            <Text $size={22} $c={g} $ml={13} $ls={0.4}>Sans Serif</Text>
            <Caret $ml={23} />
            <Cell $s={26} $ml={29}><svg viewBox="0 0 26 22" fill={g}><path d="M9 0h17v4h-6.500v18h-4.500V4H9zM0 7h12v3.500H8V22H4V10.500H0z" /></svg></Cell>
            <Caret $ml={9} />
            <Divider $ml={12} />
            <Cell $s={36} $ml={11}><MdFormatBold /></Cell>
            <Cell $s={34} $ml={15}><MdFormatItalic /></Cell>
            <Cell $s={31} $ml={18}><MdFormatUnderlined /></Cell>
            <Cell $s={23} $ml={23} $dy={2}><svg viewBox="0 0 23 24" fill={g}><path d="M9.800 0h3.400L19.500 16.500h-3.300l-1.300-3.800H8.100l-1.300 3.800H3.500zM9 10h5l-2.500-7zM1 20.500h21v2.700H1z" /></svg></Cell>
            <Caret $ml={10} />
            <Divider $ml={13} />
            <Cell $s={31} $ml={13}><MdFormatAlignLeft /></Cell>
            <Caret $ml={7} />
            <Cell $s={31} $ml={19}><MdFormatListNumbered /></Cell>
            <Divider $ml={14} />
            <Caret $ml={14} />
          </FormatBar>
          <Actions>
            <SendButton>
              <SendText>Send</SendText>
              <Caret $ml={17} $c="#fff" />
            </SendButton>
            <ToggleTile><svg width="26" height="28" viewBox="0 0 26 28" fill={g}><path d="M11.300 1h3.400L20 17h-3l-1.200-3.700h-5.600L9 17H6zM11 10.800h4L13 4.300zM.5 22h25v4.500H.5z" /></svg></ToggleTile>
            <Cell $s={28} $ml={13} $dy={-2}><svg viewBox="0 0 28 28" {...stroke(2.2)}><path d="M20.500 7v13a6.500 6.500 0 0 1-13 0V6.500a4.500 4.500 0 0 1 9 0V19a2.500 2.500 0 0 1-5 0V8" /></svg></Cell>
            <Cell $s={30} $ml={22} $dy={-3}><MdLink /></Cell>
            <Cell $s={26} $ml={22} $dy={-3}><svg viewBox="0 0 26 26"><circle cx="13" cy="13" r="11.500" {...stroke(2.3)} /><circle cx="9" cy="9.500" r="1.700" fill={g} /><circle cx="17" cy="9.500" r="1.700" fill={g} /><path d="M6.500 14.500h13a6.500 5 0 0 1-13 0z" fill={g} /></svg></Cell>
            <Cell $s={27} $ml={23} $dy={-3}><svg viewBox="0 0 27 27" {...stroke(2.3)} strokeLinejoin="round"><path d="M9.500 1.800h8L25.500 16l-4 8.200h-16L1.500 16z" /><path d="M13.500 9.500l4.500 8H9z" /></svg></Cell>
            <Cell $s={23} $ml={25} $dy={-3}><svg viewBox="0 0 23 23"><rect x="1.500" y="1.500" width="20" height="20" rx="1.500" {...stroke(2.3)} /><path d="M5 17.500l3.500-4.500 2.500 3 3.500-4.500 4 6z" fill={g} /></svg></Cell>
            <Cell $s={28} $ml={26} $dy={-3}><svg viewBox="0 0 28 28"><path d="M10 26H4V11h16v3M7.500 11V6.500a4.500 4.500 0 0 1 9 0V11" {...stroke(2.3)} /><circle cx="19.500" cy="21.500" r="6" fill={g} /><path d="M19.500 18v3.800l2.500 2" fill="none" stroke="#fff" strokeWidth="1.500" /></svg></Cell>
            <Cell $s={24} $ml={22} $dy={-2}><svg viewBox="0 0 24 24"><path d="M2.500 21.500l.8-4L16.500 4l3.500 3.500L6.500 20.700z" {...stroke(2)} /><path d="M11 8.500L18.500 1.500 23 6l-7 7.500z" fill={g} /><path d="M4.500 10L12 2.800l4 3.700" {...stroke(2)} /></svg></Cell>
            <Kebab><MdMoreVert color={g} /></Kebab>
            <Cell $s={24} $ml={109} $dy={-3}><svg viewBox="0 0 24 24"><path d="M5 4.500v16.300a1 1 0 0 0 1 1h12a1 1 0 0 0 1-1V4.500M2.500 4h19" {...stroke(2.3)} /><path d="M8.500 1h7v3h-7zM9 8h2v10H9zM13 8h2v10h-2z" fill={g} /></svg></Cell>
          </Actions>
        </Compose>
        <Marker $x={1041} $y={685} $w={126} $h={87} $c="#dc2327" />
        <Marker $x={1166} $y={687} $w={159} $h={84} $c="#0a4ed8" />
      </Mail>

      <Taskbar>
        <Weather>
          <WeatherIcon>
            <svg width="34" height="38" viewBox="0 0 34 38"><path d="M14 4c2 9-5 15-12 13 1 6 8 9 14 6 5-3 6-12-2-19z" fill="#f2a73b" /><path d="M8 35a6.500 6.500 0 0 1 0-13c1-5 5-7 9-6 4 0 6 3 7 6 10 0 9 13 1 13z" fill="#b9cdf2" /><path d="M8 35a6.500 6.500 0 0 1-6-7c6 3 22 3 30 0 0 4-3 7-7 7z" fill="#8fb0e6" /></svg>
            <WeatherBadge>8</WeatherBadge>
          </WeatherIcon>
          <Lines><Bright>27°C</Bright><span>Mostly cloudy</span></Lines>
        </Weather>
        <svg width="29" height="29" viewBox="0 0 29 29"><defs><linearGradient id="win" x2="1" y2="1"><stop stopColor="#7fdcfb" /><stop offset="1" stopColor="#0b8bf0" /></linearGradient></defs><path d="M1 0h13v14H0V1a1 1 0 0 1 1-1zM15 0h13a1 1 0 0 1 1 1v13H15zM0 15h14v14H1a1 1 0 0 1-1-1zM15 15h14v13a1 1 0 0 1-1 1H15z" fill="url(#win)" /></svg>
        <TaskSearch>
          <svg width="20" height="20" viewBox="0 0 20 20" fill="none" stroke="#1f1f1f" strokeWidth="2"><circle cx="8.500" cy="8.500" r="7" /><path d="M13.500 13.500l5 5" strokeWidth="2.600" /></svg>
          <Text $size={16} $c="#5c5c5c" $ml={12} $dy={2}>Search</Text>
        </TaskSearch>
        <Apps>
          {taskApps.map((a, i) => (
            <TaskApp key={i} $active={a.state === "active"}>
              {a.icon}
              {a.state && <Running $active={a.state === "active"} />}
              {a.state === "active" && <AppBadge>L</AppBadge>}
            </TaskApp>
          ))}
        </Apps>
        <Clock><Lines $right><span>7:49 PM</span><span>04-Sep-25</span></Lines></Clock>
      </Taskbar>
    </Screen>
  );
}
